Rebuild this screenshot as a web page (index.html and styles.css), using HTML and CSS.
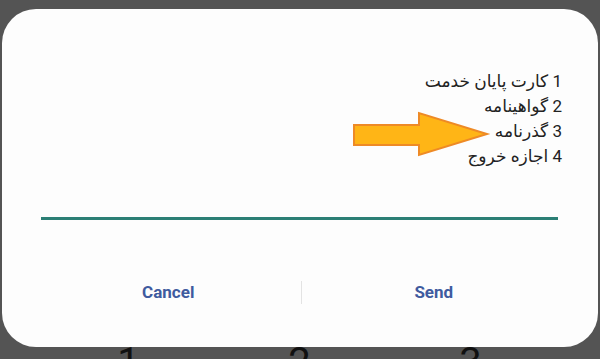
FILE: index.html
```html
<!DOCTYPE html>
<html lang="fa">
<head>
<meta charset="utf-8">
<link rel="stylesheet" href="styles.css">
</head>
<body>
<div class="screen">
  <div class="dialog">
    <div class="content">
      <div class="list" dir="rtl">
        <p class="item">1 کارت پایان خدمت</p>
        <p class="item">2 گواهینامه</p>
        <p class="item">3 گذرنامه</p>
        <p class="item">4 اجازه خروج</p>
      </div>
      <svg class="arrow" width="140" height="48" viewBox="0 0 140 48" aria-hidden="true">
        <path d="M2 14 H67 V2 L135 23 L67 44 V34 H2 Z" fill="#FFB516" stroke="#EE8A26" stroke-width="2" stroke-linejoin="miter"/>
      </svg>
    </div>
    <div class="input-line"></div>
    <div class="buttons">
      <button class="btn">Cancel</button>
      <span class="divider"></span>
      <button class="btn">Send</button>
    </div>
  </div>
  <div class="keypad">
    <span class="key">1</span>
    <span class="key">2</span>
    <span class="key">3</span>
  </div>
</div>
</body>
</html>
```

FILE: styles.css
```css
html, body {
  margin: 0;
  padding: 0;
  width: 600px;
  height: 359px;
  overflow: hidden;
  background: #545454;
  font-family: Roboto, "DejaVu Sans", sans-serif;
}

.screen {
  display: flex;
  flex-direction: column;
  padding-top: 9px;
  padding-left: 2px;
}

.dialog {
  position: relative;
  z-index: 1;
  width: 596px;
  height: 338px;
  background: #fdfdfd;
  border-radius: 34px;
  display: flex;
  flex-direction: column;
  box-sizing: border-box;
  padding-top: 60px;
}

.content {
  position: relative;
  display: flex;
  justify-content: flex-end;
  padding-right: 36px;
}

.list {
  display: flex;
  flex-direction: column;
}

.item {
  margin: 0;
  font-size: 17px;
  line-height: 25px;
  color: #222;
  text-align: right;
  white-space: nowrap;
}

.arrow {
  position: absolute;
  left: 350px;
  top: 42px;
}

.input-line {
  margin: 48px 40px 0 39px;
  height: 3px;
  background: #2b7f75;
}

.buttons {
  margin-top: 48px;
  height: 48px;
  display: flex;
  align-items: center;
  padding: 0 32px 0 34px;
}

.btn {
  flex: 1;
  border: none;
  background: none;
  padding: 0;
  font-family: Roboto, sans-serif;
  font-size: 17px;
  font-weight: 700;
  color: #3f5b9f;
  height: 48px;
}

.divider {
  width: 1px;
  height: 23px;
  background: #e3e3e3;
}

.keypad {
  margin-top: -4px;
  display: grid;
  grid-template-columns: repeat(3, 171px);
  padding-left: 41px;
}

.key {
  text-align: center;
  font-family: Roboto, sans-serif;
  font-size: 40px;
  line-height: 40px;
  color: #111;
}
```
